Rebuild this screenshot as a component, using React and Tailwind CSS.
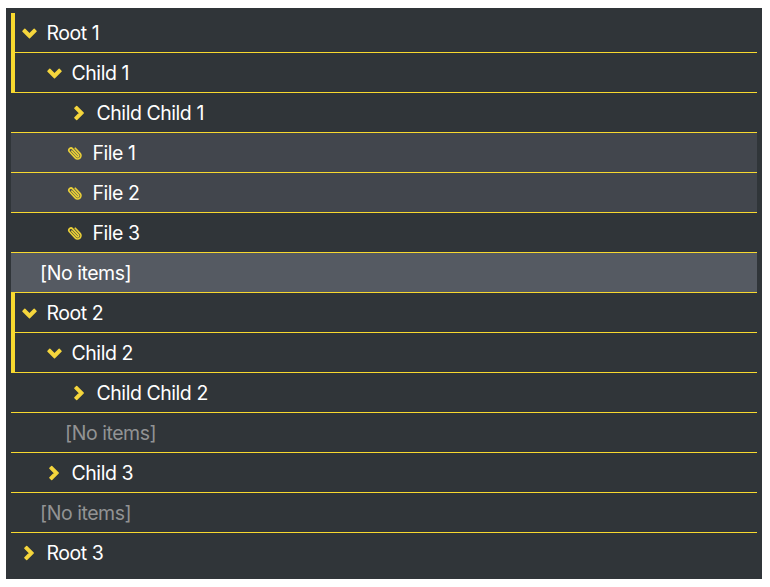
const rows = [
  { label: 'Root 1', icon: 'down', pad: 'pl-[9px]', open: true },
  { label: 'Child 1', icon: 'down', pad: 'pl-[34px]', open: true },
  { label: 'Child Child 1', icon: 'right', pad: 'pl-[59px]' },
  { label: 'File 1', icon: 'clip', pad: 'pl-[55px]', bg: 'bg-[#42464d]' },
  { label: 'File 2', icon: 'clip', pad: 'pl-[55px]', bg: 'bg-[#42464d]' },
  { label: 'File 3', icon: 'clip', pad: 'pl-[55px]' },
  { label: '[No items]', pad: 'pl-[28px]', bg: 'bg-[#555a62]' },
  { label: 'Root 2', icon: 'down', pad: 'pl-[9px]', open: true },
  { label: 'Child 2', icon: 'down', pad: 'pl-[34px]', open: true },
  { label: 'Child Child 2', icon: 'right', pad: 'pl-[59px]' },
  { label: '[No items]', pad: 'pl-[53px]', muted: true },
  { label: 'Child 3', icon: 'right', pad: 'pl-[34px]' },
  { label: '[No items]', pad: 'pl-[28px]', muted: true },
  { label: 'Root 3', icon: 'right', pad: 'pl-[9px]' },
];

function Icon({ type }) {
  if (type === 'clip') {
    return (
      <svg className="mr-[9.5px] h-4 w-4 shrink-0" viewBox="0 0 16 16" fill="none" stroke="#e9cf38" strokeWidth="1.7" strokeLinecap="round">
        <g transform="translate(7.6 7.7) rotate(47)">
          <path d="M-3.2 1H4.2A1.1 1.1 0 0 0 4.2 -1.2H-4.2A2.1 2.1 0 0 0 -4.2 3.1H4.2A3.1 3.1 0 0 0 4.2 -3.5H-2.8" />
        </g>
      </svg>
    );
  }
  return (
    <svg className="mr-[9.5px] h-4 w-4 shrink-0" viewBox="0 0 16 16" fill="#f5d63d" stroke="#f5d63d" strokeWidth="1.5" strokeLinejoin="round">
      {type === 'down' ? (
        <path d="M2 6.2L3.8 4.4L8.5 9.1L13.2 4.4L15 6.2L8.5 12.7Z" />
      ) : (
        <path d="M5.7 1.5L3.9 3.3L8.6 8L3.9 12.7L5.7 14.5L12.2 8Z" />
      )}
    </svg>
  );
}

export default function App() {
  return (
    <div className="h-[587px] w-[770px] bg-white pt-2 pl-[6px]">
      <div className="h-[571px] w-[756px] bg-[#303539] p-[5px] font-['Inter',sans-serif] text-[19.5px] font-[440] tracking-[-0.45px] text-white">
        {rows.map((row, i) => (
          <div
            key={i}
            className={`flex h-10 items-center border-[#f8d92f] ${i < rows.length - 1 ? 'border-b' : ''} ${row.open ? 'border-l-4' : ''} ${row.bg || ''}`}
          >
            <div className={`flex items-center whitespace-pre ${row.pad} ${row.open ? '-ml-[3px]' : 'ml-px'} ${row.muted ? 'text-[#929394]' : ''}`}>
              {row.icon && <Icon type={row.icon} />}
              <span className="pt-[2px]">{row.label}</span>
            </div>
          </div>
        ))}
      </div>
    </div>
  );
}
